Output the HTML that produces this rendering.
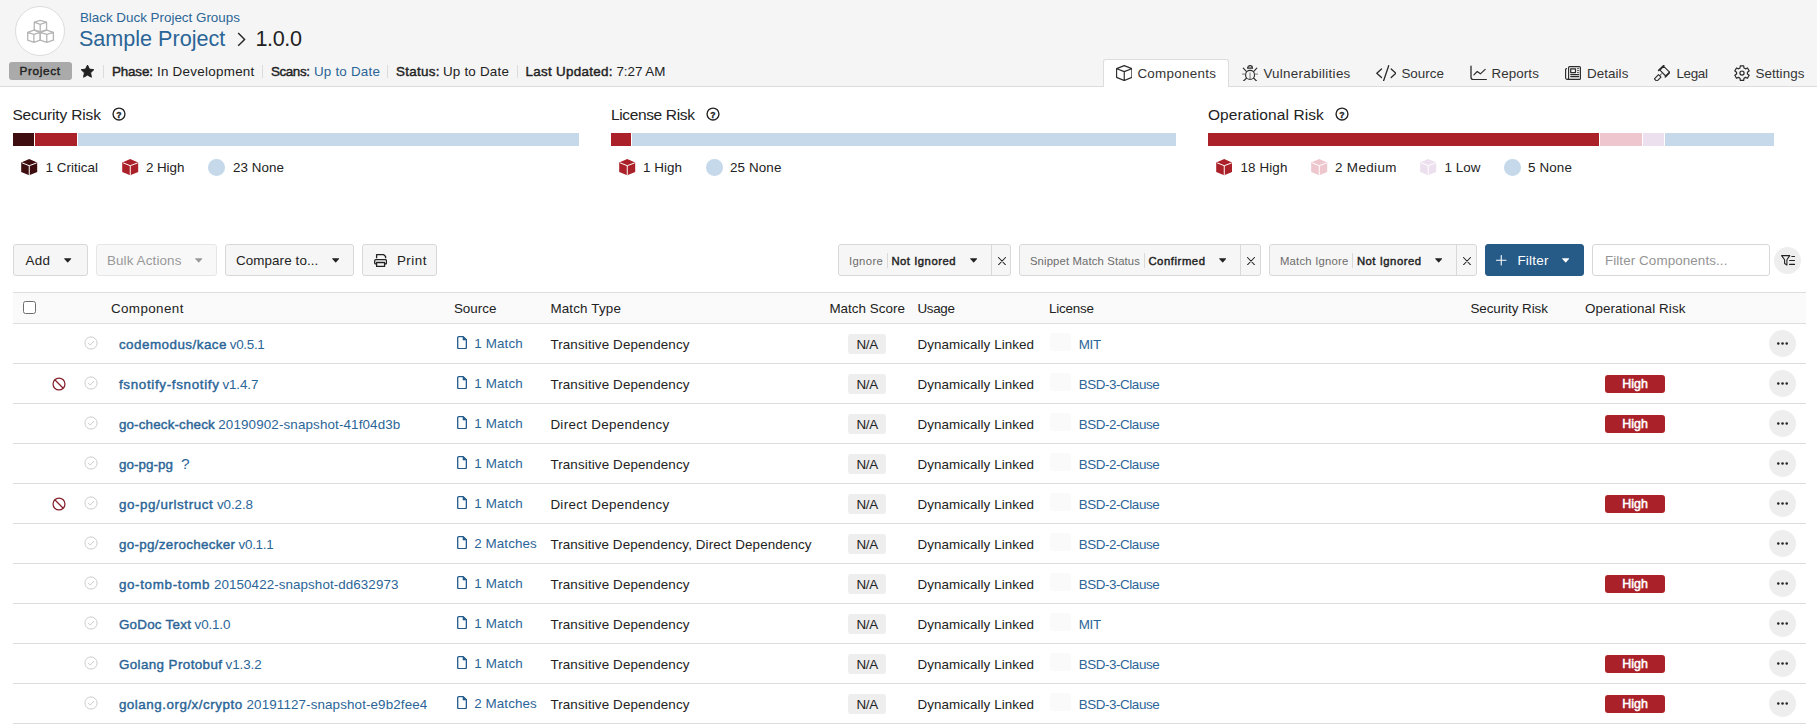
<!DOCTYPE html>
<html lang="en"><head><meta charset="utf-8"><title>Sample Project 1.0.0 - Components</title>
<style>
*{box-sizing:border-box}
html,body{margin:0;padding:0}
body{width:1817px;height:725px;overflow:hidden;background:#fff;color:#222;font-family:"Liberation Sans",sans-serif;font-size:13.4px;position:relative}
a{color:#2b6597;text-decoration:none}
.ab{position:absolute;white-space:nowrap}
header{position:absolute;left:0;top:0;width:1817px;height:87px;background:#f5f5f5;border-bottom:1px solid #ddd}
.logo{position:absolute;left:15px;top:6px;width:50px;height:50px;border-radius:50%;background:#fff;border:1px solid #dcdcdc}
h1{margin:0;font-weight:400}
.badge{position:absolute;left:9px;top:62px;width:63px;height:18px;border-radius:3px;background:#aaa}
.vsep{position:absolute;width:1px;background:#dcdcdc}
nav .tab-active{position:absolute;left:1103px;top:59px;width:126px;height:28px;background:#fff;border:1px solid #ddd;border-bottom:none;border-radius:3px 3px 0 0}
.bar{position:absolute;top:133px;height:13px;display:flex;overflow:hidden}
.bar i{display:block;flex:none;height:13px;border-right:1px solid #fff}
.bar i:last-child{border-right:none}
.dot{position:absolute;width:16.5px;height:16.5px;border-radius:50%;background:#c5d9eb}
.btn{position:absolute;top:244px;height:32px;border:1px solid #d8d8d8;border-radius:3px;background:#f6f6f6}
.btn.dis{border-color:#e6e6e6;background:#f8f8f8}
.btn.pri{background:#265a87;border-color:#265a87}
.fsplit{position:absolute;top:0;width:1px;height:30px;background:#d8d8d8}
.fsep{position:absolute;top:8px;width:1px;height:14.5px;background:#dadada}
.inp{position:absolute;left:1592px;top:244px;width:178px;height:32px;border:1px solid #d8d8d8;border-radius:3px;background:#fff}
.rbtn{position:absolute;width:27px;height:27px;border-radius:50%;background:#eee}
table{position:absolute;left:13px;top:292px;width:1793px;border-collapse:separate;border-spacing:0;table-layout:fixed}
th,td{padding:0;text-align:left;font-weight:400;white-space:nowrap;position:relative;vertical-align:top}
thead th{height:32px;background:#fafafa;border-top:1px solid #ddd;border-bottom:1px solid #ddd;line-height:28px;padding-top:2px}
tbody td{height:40px;border-bottom:1px solid #ddd;line-height:37px;padding-top:2px}
.cb{position:absolute;left:10px;top:8px;width:13px;height:13px;border:1px solid #6e6e6e;border-radius:2.5px;background:#fff}
.na{position:absolute;left:26px;top:10px;width:38px;height:19.5px;border-radius:3px;background:#eee;text-align:center;line-height:21px;letter-spacing:-.3px;padding-left:.3px}
.hi{position:absolute;left:50px;top:11px;width:60px;height:18px;border-radius:3px;background:#aa2129;color:#fff;font-size:12.4px;text-align:center;line-height:18px;-webkit-text-stroke:.5px;letter-spacing:.1px;padding-left:.3px}
.lic{position:absolute;left:8.5px;top:9px;width:21.5px;height:18px;border-radius:3px;background:#fafafa}
b{font-weight:400}
.sb{font-weight:400;-webkit-text-stroke:.42px}
</style></head>
<body>
<header>
<div class="logo"><svg class="ab" style="left:0;top:0" width="48" height="48" viewBox="0 0 48 48" fill="none" stroke="#b5b5b5" stroke-width="1.35" stroke-linejoin="round"><g transform="translate(24.55 24.4) scale(.962 .957) translate(-24.55 -24.4)"><path d="M24.2 12.9L30.8 14.7V22.8L24.2 24.9 18 22.8V14.7zM18 14.7L24.2 17 30.8 14.7M24.2 17V24.9"/><path d="M17.6 23L24.2 25.5V33.6L17.6 35.9 11.2 33.6V25.5zM11.2 25.5L17.6 27.6 24.2 25.5M17.6 27.6V35.9"/><path d="M31 23L37.9 25.5V33.6L31 35.9 24.2 33.6V25.5zM24.2 25.5L31 27.6 37.9 25.5M31 27.6V35.9"/></g></svg></div>
<a class="ab" style="left:79.9px;top:9.0px;font-size:13.4px;line-height:17px;color:#2b6597;">Black Duck Project Groups</a>
<h1><a class="ab" style="left:78.9px;top:26.0px;font-size:21.6px;line-height:25px;color:#2b6597;">Sample Project</a><svg class="ab" style="left:236.5px;top:31.5px" width="9" height="15" viewBox="0 0 9 15" ><path d="M1.2 1.1L7.6 7.5 1.2 13.8" fill="none" stroke="#222" stroke-width="1.4"/></svg><span class="ab" style="left:255.4px;top:26.0px;font-size:21.6px;line-height:25px;letter-spacing:-0.38px;">1.0.0</span></h1>
<div class="badge"><span class="ab sb" style="left:10.4px;top:1.4px;font-size:11.8px;line-height:16px;letter-spacing:0.65px;">Project</span></div>
<svg class="ab" style="left:79.9px;top:64.4px" width="15" height="15" viewBox="0 0 15 15" ><path d="M7.5 1.1l1.9 4 4.4.6-3.2 3.1.8 4.4-3.9-2.1-3.9 2.1.8-4.4L1.2 5.7l4.4-.6z" fill="#222" stroke="#222" stroke-width="1" stroke-linejoin="round"/></svg>
<i class="vsep" style="left:103px;top:65px;height:13px"></i>
<i class="vsep" style="left:262px;top:65px;height:13px"></i>
<i class="vsep" style="left:387px;top:65px;height:13px"></i>
<i class="vsep" style="left:517px;top:65px;height:13px"></i>
<b class="ab sb" style="left:111.9px;top:62.5px;font-size:13.4px;line-height:17px;letter-spacing:-0.12px;">Phase:</b><span class="ab" style="left:156.9px;top:62.5px;font-size:13.4px;line-height:17px;letter-spacing:0.28px;">In Development</span>
<b class="ab sb" style="left:270.9px;top:62.5px;font-size:13.4px;line-height:17px;letter-spacing:-0.37px;">Scans:</b><a class="ab" style="left:313.9px;top:62.5px;font-size:13.4px;line-height:17px;letter-spacing:0.22px;color:#2b6597;">Up to Date</a>
<b class="ab sb" style="left:395.9px;top:62.5px;font-size:13.4px;line-height:17px;letter-spacing:0.32px;">Status:</b><span class="ab" style="left:442.9px;top:62.5px;font-size:13.4px;line-height:17px;letter-spacing:0.22px;">Up to Date</span>
<b class="ab sb" style="left:525.4px;top:62.5px;font-size:13.4px;line-height:17px;letter-spacing:0.31px;">Last Updated:</b><span class="ab" style="left:616.4px;top:62.5px;font-size:13.4px;line-height:17px;letter-spacing:-0.02px;">7:27 AM</span>
</header>
<nav>
<div class="tab-active"></div>
<a><svg class="ab" style="left:1115.6px;top:64.8px" width="16.5" height="16.2" viewBox="0 0 16.5 16.2" ><path d="M8.25 .6 L15.9 3.6 V12.4 L8.25 15.6 L.6 12.4 V3.6 Z M.8 3.7 L8.25 6.6 L15.7 3.7 M8.25 6.6 V15.4" fill="none" stroke="#2b2b2b" stroke-width="1.15" stroke-linejoin="round"/></svg><span class="ab" style="left:1137.4px;top:64.5px;font-size:13.4px;line-height:17px;letter-spacing:0.28px;color:#333;">Components</span></a>
<a><svg class="ab" style="left:1242px;top:65px" width="16.1" height="16.4" viewBox="0 0 16.1 16.4" ><g fill="none" stroke="#2b2b2b" stroke-width="1.15" stroke-linecap="round"><path d="M5.6 3.2a2.45 2.6 0 0 1 4.9 0z" stroke-linejoin="round"/><circle cx="8.05" cy="9.9" r="4.5"/><path d="M4.3 6.3L1.3 3.2M11.8 6.3l3-3.1M4.4 13.2l-3 3M11.7 13.2l3 3"/><path d="M8.05 7.9v6.4M.3 9.1h3M12.8 9.1h3" stroke="#777" stroke-width="1"/></g></svg><span class="ab" style="left:1263.4px;top:64.5px;font-size:13.4px;line-height:17px;letter-spacing:0.29px;color:#333;">Vulnerabilities</span></a>
<a><svg class="ab" style="left:1375.8px;top:64.8px" width="20.6" height="16.5" viewBox="0 0 20.6 16.5" ><g fill="none" stroke="#2b2b2b" stroke-width="1.3" stroke-linecap="round" stroke-linejoin="round"><path d="M5.5 3.9L.8 8.2l4.7 4.3M15.2 3.9l4.7 4.3-4.7 4.3M12.7.7L7.6 15.8"/></g></svg><span class="ab" style="left:1401.4px;top:64.5px;font-size:13.4px;line-height:17px;letter-spacing:0.01px;color:#333;">Source</span></a>
<a><svg class="ab" style="left:1469.5px;top:64.8px" width="17" height="15.5" viewBox="0 0 17 15.5" ><g fill="none" stroke="#2b2b2b" stroke-linecap="round" stroke-linejoin="round"><path d="M1 1.2V12.3a2.3 2.3 0 0 0 2.3 2.3H16.3" stroke-width="1.3"/><path d="M3.9 9.8l3.3-3.3 3.2 2.3 4.8-4.5" stroke-width="1.15"/></g></svg><span class="ab" style="left:1491.4px;top:64.5px;font-size:13.4px;line-height:17px;letter-spacing:0.1px;color:#333;">Reports</span></a>
<a><svg class="ab" style="left:1565px;top:66px" width="16" height="14" viewBox="0 0 16 14" ><g fill="none" stroke="#2b2b2b" stroke-width="1.15" stroke-linejoin="round" stroke-linecap="round"><path d="M4.6.6H14.4a1 1 0 0 1 1 1V12.4a1 1 0 0 1-1 1H2.2a1.6 1.6 0 0 1-1.6-1.6V3.6a1 1 0 0 1 1-1M3.6 12.2V1.6a1 1 0 0 1 1-1M3.6 12a1.4 1.4 0 0 1-1.5 1.4"/><rect x="5.7" y="2.8" width="4.8" height="3.8" stroke-width="1.25"/><path d="M12.4 2.6h1.4M12.4 4.6h1.4M12.4 6.6h1.4" stroke="#555" stroke-width="1"/><path d="M5.7 8.6h8M5.7 10.6h8"/></g></svg><span class="ab" style="left:1586.9px;top:64.5px;font-size:13.4px;line-height:17px;letter-spacing:0.09px;color:#333;">Details</span></a>
<a><svg class="ab" style="left:1653.8px;top:64.6px" width="16.6" height="16.8" viewBox="0 0 16.6 16.8" ><g fill="none" stroke="#2b2b2b" stroke-linejoin="round" stroke-linecap="round"><path d="M5.9 5.2L9.7 1.4l5.8 5.8-3.8 3.8z" stroke-width="1.1"/><path d="M4.7 5.4L9.8.4M11.3 12l4.9-5" stroke-width="1.5"/><path d="M7.5 8.8L6 10.5" stroke-width="1"/><path d="M4.5 9.7L7 12.1 2.8 16.3.4 13.9z" stroke-width="1.15"/></g></svg><span class="ab" style="left:1676.4px;top:64.5px;font-size:13.4px;line-height:17px;letter-spacing:-0.32px;color:#333;">Legal</span></a>
<a><svg class="ab" style="left:1734px;top:64.8px" width="16" height="16.2" viewBox="0 0 16 16.2" ><g fill="none" stroke="#2b2b2b" stroke-width="1.2" stroke-linejoin="round"><path d="M6.03 2.97 L6.31 0.79 L9.69 0.79 L9.97 2.97 L11.46 3.83 L13.49 2.99 L15.17 5.91 L13.43 7.24 L13.43 8.96 L15.17 10.29 L13.49 13.21 L11.46 12.37 L9.97 13.23 L9.69 15.41 L6.31 15.41 L6.03 13.23 L4.54 12.37 L2.51 13.21 L0.83 10.29 L2.57 8.96 L2.57 7.24 L0.83 5.91 L2.51 2.99 L4.54 3.83Z"/><circle cx="8" cy="8.1" r="2.1"/></g></svg><span class="ab" style="left:1755.4px;top:64.5px;font-size:13.4px;line-height:17px;letter-spacing:0.09px;color:#333;">Settings</span></a>
</nav>
<section><h2 class="ab" style="left:12.4px;top:104.5px;font-size:15.5px;line-height:19px;letter-spacing:-0.16px;margin:0;font-weight:400;">Security Risk</h2><svg class="ab" style="left:112.3px;top:107.4px" width="14" height="14" viewBox="0 0 14 14" ><circle cx="7" cy="7" r="5.95" fill="none" stroke="#222" stroke-width="1.35"/><text x="6.9" y="10.6" font-size="8.6" font-weight="700" text-anchor="middle" fill="#222" stroke="#222" stroke-width=".35" font-family="Liberation Sans,sans-serif">?</text></svg><div class="bar" style="left:13px;width:566px"><i style="width:3.8462%;background:#3e0d10"></i><i style="width:7.6923%;background:#aa2129"></i><i style="width:88.4615%;background:#c5d9eb"></i></div><svg class="ab" style="left:21px;top:159px" width="16.5" height="16.5" viewBox="0 0 16.5 16.5" ><path d="M8.2 .1L16.2 3.6V12.9L8.2 16.3 .2 12.9V3.6z" fill="#3e0d10"/><path d="M1.2 3.9L8.25 6.7 15.7 3.9M8.25 6.7V16" fill="none" stroke="#fff" stroke-width="1"/></svg><span class="ab" style="left:45.4px;top:158.5px;font-size:13.4px;line-height:17px;letter-spacing:0.05px;">1 Critical</span><svg class="ab" style="left:122px;top:159px" width="16.5" height="16.5" viewBox="0 0 16.5 16.5" ><path d="M8.2 .1L16.2 3.6V12.9L8.2 16.3 .2 12.9V3.6z" fill="#aa2129"/><path d="M1.2 3.9L8.25 6.7 15.7 3.9M8.25 6.7V16" fill="none" stroke="#fff" stroke-width="1"/></svg><span class="ab" style="left:145.9px;top:158.5px;font-size:13.4px;line-height:17px;letter-spacing:-0.04px;">2 High</span><i class="dot" style="left:208px;top:159px;background:#c5d9eb"></i><span class="ab" style="left:232.9px;top:158.5px;font-size:13.4px;line-height:17px;letter-spacing:0.06px;">23 None</span></section>
<section><h2 class="ab" style="left:610.9px;top:104.5px;font-size:15.5px;line-height:19px;letter-spacing:-0.35px;margin:0;font-weight:400;">License Risk</h2><svg class="ab" style="left:706px;top:107.4px" width="14" height="14" viewBox="0 0 14 14" ><circle cx="7" cy="7" r="5.95" fill="none" stroke="#222" stroke-width="1.35"/><text x="6.9" y="10.6" font-size="8.6" font-weight="700" text-anchor="middle" fill="#222" stroke="#222" stroke-width=".35" font-family="Liberation Sans,sans-serif">?</text></svg><div class="bar" style="left:610.67px;width:565.3px"><i style="width:3.8462%;background:#aa2129"></i><i style="width:96.1538%;background:#c5d9eb"></i></div><svg class="ab" style="left:619px;top:159px" width="16.5" height="16.5" viewBox="0 0 16.5 16.5" ><path d="M8.2 .1L16.2 3.6V12.9L8.2 16.3 .2 12.9V3.6z" fill="#aa2129"/><path d="M1.2 3.9L8.25 6.7 15.7 3.9M8.25 6.7V16" fill="none" stroke="#fff" stroke-width="1"/></svg><span class="ab" style="left:642.9px;top:158.5px;font-size:13.4px;line-height:17px;letter-spacing:0.06px;">1 High</span><i class="dot" style="left:706px;top:159px;background:#c5d9eb"></i><span class="ab" style="left:729.9px;top:158.5px;font-size:13.4px;line-height:17px;letter-spacing:0.14px;">25 None</span></section>
<section><h2 class="ab" style="left:1207.9px;top:104.5px;font-size:15.5px;line-height:19px;letter-spacing:0.09px;margin:0;font-weight:400;">Operational Risk</h2><svg class="ab" style="left:1335.3px;top:107.4px" width="14" height="14" viewBox="0 0 14 14" ><circle cx="7" cy="7" r="5.95" fill="none" stroke="#222" stroke-width="1.35"/><text x="6.9" y="10.6" font-size="8.6" font-weight="700" text-anchor="middle" fill="#222" stroke="#222" stroke-width=".35" font-family="Liberation Sans,sans-serif">?</text></svg><div class="bar" style="left:1208px;width:566px"><i style="width:69.2308%;background:#aa2129"></i><i style="width:7.6923%;background:#eec6cd"></i><i style="width:3.8462%;background:#ecdfee"></i><i style="width:19.2308%;background:#c5d9eb"></i></div><svg class="ab" style="left:1215.5px;top:159px" width="16.5" height="16.5" viewBox="0 0 16.5 16.5" ><path d="M8.2 .1L16.2 3.6V12.9L8.2 16.3 .2 12.9V3.6z" fill="#aa2129"/><path d="M1.2 3.9L8.25 6.7 15.7 3.9M8.25 6.7V16" fill="none" stroke="#fff" stroke-width="1"/></svg><span class="ab" style="left:1240.4px;top:158.5px;font-size:13.4px;line-height:17px;letter-spacing:0.14px;">18 High</span><svg class="ab" style="left:1311px;top:159px" width="16.5" height="16.5" viewBox="0 0 16.5 16.5" ><path d="M8.2 .1L16.2 3.6V12.9L8.2 16.3 .2 12.9V3.6z" fill="#eec6cd"/><path d="M1.2 3.9L8.25 6.7 15.7 3.9M8.25 6.7V16" fill="none" stroke="#fff" stroke-width="1"/></svg><span class="ab" style="left:1334.9px;top:158.5px;font-size:13.4px;line-height:17px;letter-spacing:0.39px;">2 Medium</span><svg class="ab" style="left:1420px;top:159px" width="16.5" height="16.5" viewBox="0 0 16.5 16.5" ><path d="M8.2 .1L16.2 3.6V12.9L8.2 16.3 .2 12.9V3.6z" fill="#ecdfee"/><path d="M1.2 3.9L8.25 6.7 15.7 3.9M8.25 6.7V16" fill="none" stroke="#fff" stroke-width="1"/></svg><span class="ab" style="left:1444.4px;top:158.5px;font-size:13.4px;line-height:17px;letter-spacing:0.07px;">1 Low</span><i class="dot" style="left:1504px;top:159px;background:#c5d9eb"></i><span class="ab" style="left:1527.9px;top:158.5px;font-size:13.4px;line-height:17px;letter-spacing:0.16px;">5 None</span></section>
<div class="toolbar">
<div class="btn " style="left:13px;width:75px"><span class="ab" style="left:11.4px;top:6.5px;font-size:13.4px;line-height:17px;letter-spacing:0.34px;">Add</span><svg class="ab" style="left:50px;top:13.300000000000011px" width="7.5" height="5" viewBox="0 0 7.5 5" ><path d="M.6.3h6.2a.4.4 0 0 1 .3.7L4.1 4.3a.6.6 0 0 1-.8 0L.3 1A.4.4 0 0 1 .6.3z" fill="#222"/></svg></div>
<div class="btn dis" style="left:96px;width:121px"><span class="ab" style="left:9.9px;top:6.5px;font-size:13.4px;line-height:17px;letter-spacing:0.14px;color:#999;">Bulk Actions</span><svg class="ab" style="left:98px;top:13.300000000000011px" width="7.5" height="5" viewBox="0 0 7.5 5" ><path d="M.6.3h6.2a.4.4 0 0 1 .3.7L4.1 4.3a.6.6 0 0 1-.8 0L.3 1A.4.4 0 0 1 .6.3z" fill="#999"/></svg></div>
<div class="btn " style="left:225px;width:129px"><span class="ab" style="left:9.9px;top:6.5px;font-size:13.4px;line-height:17px;letter-spacing:0.11px;">Compare to...</span><svg class="ab" style="left:105.5px;top:13.300000000000011px" width="7.5" height="5" viewBox="0 0 7.5 5" ><path d="M.6.3h6.2a.4.4 0 0 1 .3.7L4.1 4.3a.6.6 0 0 1-.8 0L.3 1A.4.4 0 0 1 .6.3z" fill="#222"/></svg></div>
<div class="btn " style="left:362px;width:75px"><svg class="ab" style="left:11px;top:9px" width="13.2" height="13.2" viewBox="0 0 13.2 13.2" ><g fill="none" stroke="#222" stroke-width="1.3" stroke-linejoin="round"><path d="M2.6 4.3V.7h7.2l1.8 1.8v1.8" /><path d="M2.6 9.9H1.7a1 1 0 0 1-1-1V6.8a1.2 1.2 0 0 1 1.2-1.2h9.4a1.2 1.2 0 0 1 1.2 1.2v2.1a1 1 0 0 1-1 1H10.6"/><rect x="2.6" y="8.5" width="8" height="4"/></g></svg><span class="ab" style="left:33.9px;top:6.5px;font-size:13.4px;line-height:17px;letter-spacing:0.49px;">Print</span></div>
<div class="btn " style="left:838px;width:173px"><span class="ab" style="left:9.9px;top:9.0px;font-size:11.3px;line-height:15px;letter-spacing:0.39px;color:#6c6c6c;">Ignore</span><i class="fsep" style="left:48px"></i><span class="ab sb" style="left:52.4px;top:9.0px;font-size:11.3px;line-height:15px;letter-spacing:0.51px;">Not Ignored</span><svg class="ab" style="left:130.8px;top:13.300000000000011px" width="7.5" height="5" viewBox="0 0 7.5 5" ><path d="M.6.3h6.2a.4.4 0 0 1 .3.7L4.1 4.3a.6.6 0 0 1-.8 0L.3 1A.4.4 0 0 1 .6.3z" fill="#222"/></svg><i class="fsplit" style="left:152px"></i><svg class="ab" style="left:159px;top:11.5px" width="8" height="8.3" viewBox="0 0 8 8.3" ><path d="M.5.5l7 7.3M7.5.5l-7 7.3" stroke="#222" stroke-width="1.05" fill="none" stroke-linecap="round"/></svg></div>
<div class="btn " style="left:1019px;width:242px"><span class="ab" style="left:9.9px;top:9.0px;font-size:11.3px;line-height:15px;letter-spacing:0.14px;color:#6c6c6c;">Snippet Match Status</span><i class="fsep" style="left:124px"></i><span class="ab sb" style="left:128.4px;top:9.0px;font-size:11.3px;line-height:15px;letter-spacing:0.56px;">Confirmed</span><svg class="ab" style="left:198.8px;top:13.300000000000011px" width="7.5" height="5" viewBox="0 0 7.5 5" ><path d="M.6.3h6.2a.4.4 0 0 1 .3.7L4.1 4.3a.6.6 0 0 1-.8 0L.3 1A.4.4 0 0 1 .6.3z" fill="#222"/></svg><i class="fsplit" style="left:220px"></i><svg class="ab" style="left:227.2px;top:11.5px" width="8" height="8.3" viewBox="0 0 8 8.3" ><path d="M.5.5l7 7.3M7.5.5l-7 7.3" stroke="#222" stroke-width="1.05" fill="none" stroke-linecap="round"/></svg></div>
<div class="btn " style="left:1269px;width:208px"><span class="ab" style="left:9.9px;top:9.0px;font-size:11.3px;line-height:15px;letter-spacing:0.23px;color:#6c6c6c;">Match Ignore</span><i class="fsep" style="left:82px"></i><span class="ab sb" style="left:86.9px;top:9.0px;font-size:11.3px;line-height:15px;letter-spacing:0.51px;">Not Ignored</span><svg class="ab" style="left:164.8px;top:13.300000000000011px" width="7.5" height="5" viewBox="0 0 7.5 5" ><path d="M.6.3h6.2a.4.4 0 0 1 .3.7L4.1 4.3a.6.6 0 0 1-.8 0L.3 1A.4.4 0 0 1 .6.3z" fill="#222"/></svg><i class="fsplit" style="left:186px"></i><svg class="ab" style="left:192.7px;top:11.5px" width="8" height="8.3" viewBox="0 0 8 8.3" ><path d="M.5.5l7 7.3M7.5.5l-7 7.3" stroke="#222" stroke-width="1.05" fill="none" stroke-linecap="round"/></svg></div>
<div class="btn pri" style="left:1485px;width:99px"><svg class="ab" style="left:10.2px;top:10.300000000000011px" width="10.5" height="10.5" viewBox="0 0 10.5 10.5" ><path d="M5.25.5v9.5M.5 5.25h9.5" stroke="#fff" stroke-width="1.1" fill="none" stroke-linecap="round"/></svg><span class="ab" style="left:31.4px;top:6.5px;font-size:13.4px;line-height:17px;letter-spacing:0.25px;color:#fff;">Filter</span><svg class="ab" style="left:75.5px;top:13.300000000000011px" width="7.5" height="5" viewBox="0 0 7.5 5" ><path d="M.6.3h6.2a.4.4 0 0 1 .3.7L4.1 4.3a.6.6 0 0 1-.8 0L.3 1A.4.4 0 0 1 .6.3z" fill="#fff"/></svg></div>
<div class="inp"><span class="ab" style="left:11.9px;top:6.5px;font-size:13.4px;line-height:17px;letter-spacing:0.1px;color:#949494;">Filter Components...</span></div>
<div class="rbtn" style="left:1774px;top:247px"><svg class="ab" style="left:6.5px;top:8px" width="14.5" height="11" viewBox="0 0 14.5 11" ><g fill="none" stroke="#222" stroke-width="1.1" stroke-linejoin="round" stroke-linecap="round"><path d="M.6.6h8.2L5.9 4.7v5.2L3.6 8.6V4.7z"/><path d="M10.8 1.5h2.7M8.6 5.5h4.9M8.6 9.4h4.9"/></g></svg></div>
</div>
<table><colgroup><col style="width:29px"><col style="width:34px"><col style="width:28px"><col style="width:343px"><col style="width:96px"><col style="width:279px"><col style="width:88px"><col style="width:131px"><col style="width:422px"><col style="width:92px"><col style="width:160px"><col style="width:91px"></colgroup>
<thead><tr><th><i class="cb"></i></th><th></th><th></th><th style="padding-left:6.9px"><span style="letter-spacing:0.41px;">Component</span></th><th style="padding-left:6.9px"><span style="letter-spacing:0.01px;">Source</span></th><th style="padding-left:7.4px"><span style="letter-spacing:0.17px;">Match Type</span></th><th style="padding-left:7.4px"><span style="letter-spacing:0.03px;">Match Score</span></th><th style="padding-left:7.4px"><span style="letter-spacing:-0.3px;">Usage</span></th><th style="padding-left:7.9px"><span style="letter-spacing:-0.19px;">License</span></th><th style="padding-left:7.4px"><span style="letter-spacing:-0.05px;">Security Risk</span></th><th style="padding-left:29.9px"><span style="letter-spacing:0.1px;">Operational Risk</span></th><th></th></tr></thead><tbody>
<tr><td></td><td></td><td><svg class="ab" style="left:8.25px;top:12.4px" width="14" height="14" viewBox="0 0 14 14" ><circle cx="7" cy="7" r="6.1" fill="none" stroke="#ccc" stroke-width="1"/><path d="M4.3 7.2l1.9 1.9 3.6-3.8" fill="none" stroke="#ccc" stroke-width="1" stroke-linecap="round" stroke-linejoin="round"/></svg></td><td style="padding-left:14.9px"><a><b class="sb" style="letter-spacing:0.49px;">codemodus/kace</b><span style="margin-left:2.8px;letter-spacing:-0.3px">v0.5.1</span></a></td><td><a><svg class="ab" style="left:10px;top:12px" width="10" height="13.2" viewBox="0 0 10 13.2" ><path d="M1.8.65H6.2L9.35 3.8V11.5a1.1 1.1 0 0 1-1.1 1.1H1.8a1.1 1.1 0 0 1-1.1-1.1V1.75a1.1 1.1 0 0 1 1.1-1.1z" fill="none" stroke="#245a8c" stroke-width="1.3" stroke-linejoin="round"/><path d="M6 .65V4H9.35z" fill="#245a8c" stroke="#245a8c" stroke-width=".6" stroke-linejoin="round"/></svg><span class="ab" style="left:27.2px;top:1px;letter-spacing:0.14px">1 Match</span></a></td><td style="padding-left:7.4px"><span style="letter-spacing:0.13px">Transitive Dependency</span></td><td><span class="na">N/A</span></td><td style="padding-left:7.4px"><span style="letter-spacing:0.07px;">Dynamically Linked</span></td><td><i class="lic"></i><a class="ab" style="left:37.7px;top:2px;letter-spacing:-0.28px">MIT</a></td><td></td><td></td><td><span class="rbtn" style="left:54px;top:6px"><svg class="ab" style="left:8px;top:12px" width="11" height="3" viewBox="0 0 11 3" ><circle cx="1.3" cy="1.5" r="1.25" fill="#222"/><circle cx="5.5" cy="1.5" r="1.25" fill="#222"/><circle cx="9.7" cy="1.5" r="1.25" fill="#222"/></svg></span></td></tr>
<tr><td></td><td><svg class="ab" style="left:10.299999999999997px;top:12.5px" width="14" height="14" viewBox="0 0 14 14" ><circle cx="7" cy="7" r="5.95" fill="none" stroke="#85202c" stroke-width="1.25"/><path d="M2.8 2.8L11.2 11.2" stroke="#85202c" stroke-width="1.25"/></svg></td><td><svg class="ab" style="left:8.25px;top:12.4px" width="14" height="14" viewBox="0 0 14 14" ><circle cx="7" cy="7" r="6.1" fill="none" stroke="#ccc" stroke-width="1"/><path d="M4.3 7.2l1.9 1.9 3.6-3.8" fill="none" stroke="#ccc" stroke-width="1" stroke-linecap="round" stroke-linejoin="round"/></svg></td><td style="padding-left:14.9px"><a><b class="sb" style="letter-spacing:0.67px;">fsnotify-fsnotify</b><span style="margin-left:2.8px;letter-spacing:-0.1px">v1.4.7</span></a></td><td><a><svg class="ab" style="left:10px;top:12px" width="10" height="13.2" viewBox="0 0 10 13.2" ><path d="M1.8.65H6.2L9.35 3.8V11.5a1.1 1.1 0 0 1-1.1 1.1H1.8a1.1 1.1 0 0 1-1.1-1.1V1.75a1.1 1.1 0 0 1 1.1-1.1z" fill="none" stroke="#245a8c" stroke-width="1.3" stroke-linejoin="round"/><path d="M6 .65V4H9.35z" fill="#245a8c" stroke="#245a8c" stroke-width=".6" stroke-linejoin="round"/></svg><span class="ab" style="left:27.2px;top:1px;letter-spacing:0.14px">1 Match</span></a></td><td style="padding-left:7.4px"><span style="letter-spacing:0.13px">Transitive Dependency</span></td><td><span class="na">N/A</span></td><td style="padding-left:7.4px"><span style="letter-spacing:0.07px;">Dynamically Linked</span></td><td><i class="lic"></i><a class="ab" style="left:37.7px;top:2px;letter-spacing:-0.42px">BSD-3-Clause</a></td><td></td><td><span class="hi">High</span></td><td><span class="rbtn" style="left:54px;top:6px"><svg class="ab" style="left:8px;top:12px" width="11" height="3" viewBox="0 0 11 3" ><circle cx="1.3" cy="1.5" r="1.25" fill="#222"/><circle cx="5.5" cy="1.5" r="1.25" fill="#222"/><circle cx="9.7" cy="1.5" r="1.25" fill="#222"/></svg></span></td></tr>
<tr><td></td><td></td><td><svg class="ab" style="left:8.25px;top:12.4px" width="14" height="14" viewBox="0 0 14 14" ><circle cx="7" cy="7" r="6.1" fill="none" stroke="#ccc" stroke-width="1"/><path d="M4.3 7.2l1.9 1.9 3.6-3.8" fill="none" stroke="#ccc" stroke-width="1" stroke-linecap="round" stroke-linejoin="round"/></svg></td><td style="padding-left:14.9px"><a><b class="sb" style="letter-spacing:0.16px;">go-check-check</b><span style="margin-left:3.4px;letter-spacing:0.13px">20190902-snapshot-41f04d3b</span></a></td><td><a><svg class="ab" style="left:10px;top:12px" width="10" height="13.2" viewBox="0 0 10 13.2" ><path d="M1.8.65H6.2L9.35 3.8V11.5a1.1 1.1 0 0 1-1.1 1.1H1.8a1.1 1.1 0 0 1-1.1-1.1V1.75a1.1 1.1 0 0 1 1.1-1.1z" fill="none" stroke="#245a8c" stroke-width="1.3" stroke-linejoin="round"/><path d="M6 .65V4H9.35z" fill="#245a8c" stroke="#245a8c" stroke-width=".6" stroke-linejoin="round"/></svg><span class="ab" style="left:27.2px;top:1px;letter-spacing:0.14px">1 Match</span></a></td><td style="padding-left:7.4px"><span style="letter-spacing:0.31px">Direct Dependency</span></td><td><span class="na">N/A</span></td><td style="padding-left:7.4px"><span style="letter-spacing:0.07px;">Dynamically Linked</span></td><td><i class="lic"></i><a class="ab" style="left:37.7px;top:2px;letter-spacing:-0.42px">BSD-2-Clause</a></td><td></td><td><span class="hi">High</span></td><td><span class="rbtn" style="left:54px;top:6px"><svg class="ab" style="left:8px;top:12px" width="11" height="3" viewBox="0 0 11 3" ><circle cx="1.3" cy="1.5" r="1.25" fill="#222"/><circle cx="5.5" cy="1.5" r="1.25" fill="#222"/><circle cx="9.7" cy="1.5" r="1.25" fill="#222"/></svg></span></td></tr>
<tr><td></td><td></td><td><svg class="ab" style="left:8.25px;top:12.4px" width="14" height="14" viewBox="0 0 14 14" ><circle cx="7" cy="7" r="6.1" fill="none" stroke="#ccc" stroke-width="1"/><path d="M4.3 7.2l1.9 1.9 3.6-3.8" fill="none" stroke="#ccc" stroke-width="1" stroke-linecap="round" stroke-linejoin="round"/></svg></td><td style="padding-left:14.9px"><a><b class="sb" style="letter-spacing:0.07px;">go-pg-pg</b><span style="margin-left:8.0px;font-size:15.5px;line-height:20px;vertical-align:baseline">?</span></a></td><td><a><svg class="ab" style="left:10px;top:12px" width="10" height="13.2" viewBox="0 0 10 13.2" ><path d="M1.8.65H6.2L9.35 3.8V11.5a1.1 1.1 0 0 1-1.1 1.1H1.8a1.1 1.1 0 0 1-1.1-1.1V1.75a1.1 1.1 0 0 1 1.1-1.1z" fill="none" stroke="#245a8c" stroke-width="1.3" stroke-linejoin="round"/><path d="M6 .65V4H9.35z" fill="#245a8c" stroke="#245a8c" stroke-width=".6" stroke-linejoin="round"/></svg><span class="ab" style="left:27.2px;top:1px;letter-spacing:0.14px">1 Match</span></a></td><td style="padding-left:7.4px"><span style="letter-spacing:0.13px">Transitive Dependency</span></td><td><span class="na">N/A</span></td><td style="padding-left:7.4px"><span style="letter-spacing:0.07px;">Dynamically Linked</span></td><td><i class="lic"></i><a class="ab" style="left:37.7px;top:2px;letter-spacing:-0.42px">BSD-2-Clause</a></td><td></td><td></td><td><span class="rbtn" style="left:54px;top:6px"><svg class="ab" style="left:8px;top:12px" width="11" height="3" viewBox="0 0 11 3" ><circle cx="1.3" cy="1.5" r="1.25" fill="#222"/><circle cx="5.5" cy="1.5" r="1.25" fill="#222"/><circle cx="9.7" cy="1.5" r="1.25" fill="#222"/></svg></span></td></tr>
<tr><td></td><td><svg class="ab" style="left:10.299999999999997px;top:12.5px" width="14" height="14" viewBox="0 0 14 14" ><circle cx="7" cy="7" r="5.95" fill="none" stroke="#85202c" stroke-width="1.25"/><path d="M2.8 2.8L11.2 11.2" stroke="#85202c" stroke-width="1.25"/></svg></td><td><svg class="ab" style="left:8.25px;top:12.4px" width="14" height="14" viewBox="0 0 14 14" ><circle cx="7" cy="7" r="6.1" fill="none" stroke="#ccc" stroke-width="1"/><path d="M4.3 7.2l1.9 1.9 3.6-3.8" fill="none" stroke="#ccc" stroke-width="1" stroke-linecap="round" stroke-linejoin="round"/></svg></td><td style="padding-left:14.9px"><a><b class="sb" style="letter-spacing:0.59px;">go-pg/urlstruct</b><span style="margin-left:3.6px;letter-spacing:-0.08px">v0.2.8</span></a></td><td><a><svg class="ab" style="left:10px;top:12px" width="10" height="13.2" viewBox="0 0 10 13.2" ><path d="M1.8.65H6.2L9.35 3.8V11.5a1.1 1.1 0 0 1-1.1 1.1H1.8a1.1 1.1 0 0 1-1.1-1.1V1.75a1.1 1.1 0 0 1 1.1-1.1z" fill="none" stroke="#245a8c" stroke-width="1.3" stroke-linejoin="round"/><path d="M6 .65V4H9.35z" fill="#245a8c" stroke="#245a8c" stroke-width=".6" stroke-linejoin="round"/></svg><span class="ab" style="left:27.2px;top:1px;letter-spacing:0.14px">1 Match</span></a></td><td style="padding-left:7.4px"><span style="letter-spacing:0.31px">Direct Dependency</span></td><td><span class="na">N/A</span></td><td style="padding-left:7.4px"><span style="letter-spacing:0.07px;">Dynamically Linked</span></td><td><i class="lic"></i><a class="ab" style="left:37.7px;top:2px;letter-spacing:-0.42px">BSD-2-Clause</a></td><td></td><td><span class="hi">High</span></td><td><span class="rbtn" style="left:54px;top:6px"><svg class="ab" style="left:8px;top:12px" width="11" height="3" viewBox="0 0 11 3" ><circle cx="1.3" cy="1.5" r="1.25" fill="#222"/><circle cx="5.5" cy="1.5" r="1.25" fill="#222"/><circle cx="9.7" cy="1.5" r="1.25" fill="#222"/></svg></span></td></tr>
<tr><td></td><td></td><td><svg class="ab" style="left:8.25px;top:12.4px" width="14" height="14" viewBox="0 0 14 14" ><circle cx="7" cy="7" r="6.1" fill="none" stroke="#ccc" stroke-width="1"/><path d="M4.3 7.2l1.9 1.9 3.6-3.8" fill="none" stroke="#ccc" stroke-width="1" stroke-linecap="round" stroke-linejoin="round"/></svg></td><td style="padding-left:14.9px"><a><b class="sb" style="letter-spacing:0.33px;">go-pg/zerochecker</b><span style="margin-left:3.2px;letter-spacing:-0.28px">v0.1.1</span></a></td><td><a><svg class="ab" style="left:10px;top:12px" width="10" height="13.2" viewBox="0 0 10 13.2" ><path d="M1.8.65H6.2L9.35 3.8V11.5a1.1 1.1 0 0 1-1.1 1.1H1.8a1.1 1.1 0 0 1-1.1-1.1V1.75a1.1 1.1 0 0 1 1.1-1.1z" fill="none" stroke="#245a8c" stroke-width="1.3" stroke-linejoin="round"/><path d="M6 .65V4H9.35z" fill="#245a8c" stroke="#245a8c" stroke-width=".6" stroke-linejoin="round"/></svg><span class="ab" style="left:27.2px;top:1px;letter-spacing:0.09px">2 Matches</span></a></td><td style="padding-left:7.4px"><span style="letter-spacing:0.11px">Transitive Dependency, Direct Dependency</span></td><td><span class="na">N/A</span></td><td style="padding-left:7.4px"><span style="letter-spacing:0.07px;">Dynamically Linked</span></td><td><i class="lic"></i><a class="ab" style="left:37.7px;top:2px;letter-spacing:-0.42px">BSD-2-Clause</a></td><td></td><td></td><td><span class="rbtn" style="left:54px;top:6px"><svg class="ab" style="left:8px;top:12px" width="11" height="3" viewBox="0 0 11 3" ><circle cx="1.3" cy="1.5" r="1.25" fill="#222"/><circle cx="5.5" cy="1.5" r="1.25" fill="#222"/><circle cx="9.7" cy="1.5" r="1.25" fill="#222"/></svg></span></td></tr>
<tr><td></td><td></td><td><svg class="ab" style="left:8.25px;top:12.4px" width="14" height="14" viewBox="0 0 14 14" ><circle cx="7" cy="7" r="6.1" fill="none" stroke="#ccc" stroke-width="1"/><path d="M4.3 7.2l1.9 1.9 3.6-3.8" fill="none" stroke="#ccc" stroke-width="1" stroke-linecap="round" stroke-linejoin="round"/></svg></td><td style="padding-left:14.9px"><a><b class="sb" style="letter-spacing:0.66px;">go-tomb-tomb</b><span style="margin-left:3.8px;letter-spacing:0.08px">20150422-snapshot-dd632973</span></a></td><td><a><svg class="ab" style="left:10px;top:12px" width="10" height="13.2" viewBox="0 0 10 13.2" ><path d="M1.8.65H6.2L9.35 3.8V11.5a1.1 1.1 0 0 1-1.1 1.1H1.8a1.1 1.1 0 0 1-1.1-1.1V1.75a1.1 1.1 0 0 1 1.1-1.1z" fill="none" stroke="#245a8c" stroke-width="1.3" stroke-linejoin="round"/><path d="M6 .65V4H9.35z" fill="#245a8c" stroke="#245a8c" stroke-width=".6" stroke-linejoin="round"/></svg><span class="ab" style="left:27.2px;top:1px;letter-spacing:0.14px">1 Match</span></a></td><td style="padding-left:7.4px"><span style="letter-spacing:0.13px">Transitive Dependency</span></td><td><span class="na">N/A</span></td><td style="padding-left:7.4px"><span style="letter-spacing:0.07px;">Dynamically Linked</span></td><td><i class="lic"></i><a class="ab" style="left:37.7px;top:2px;letter-spacing:-0.42px">BSD-3-Clause</a></td><td></td><td><span class="hi">High</span></td><td><span class="rbtn" style="left:54px;top:6px"><svg class="ab" style="left:8px;top:12px" width="11" height="3" viewBox="0 0 11 3" ><circle cx="1.3" cy="1.5" r="1.25" fill="#222"/><circle cx="5.5" cy="1.5" r="1.25" fill="#222"/><circle cx="9.7" cy="1.5" r="1.25" fill="#222"/></svg></span></td></tr>
<tr><td></td><td></td><td><svg class="ab" style="left:8.25px;top:12.4px" width="14" height="14" viewBox="0 0 14 14" ><circle cx="7" cy="7" r="6.1" fill="none" stroke="#ccc" stroke-width="1"/><path d="M4.3 7.2l1.9 1.9 3.6-3.8" fill="none" stroke="#ccc" stroke-width="1" stroke-linecap="round" stroke-linejoin="round"/></svg></td><td style="padding-left:14.9px"><a><b class="sb" style="letter-spacing:0.25px;">GoDoc Text</b><span style="margin-left:3.5px;letter-spacing:-0.14px">v0.1.0</span></a></td><td><a><svg class="ab" style="left:10px;top:12px" width="10" height="13.2" viewBox="0 0 10 13.2" ><path d="M1.8.65H6.2L9.35 3.8V11.5a1.1 1.1 0 0 1-1.1 1.1H1.8a1.1 1.1 0 0 1-1.1-1.1V1.75a1.1 1.1 0 0 1 1.1-1.1z" fill="none" stroke="#245a8c" stroke-width="1.3" stroke-linejoin="round"/><path d="M6 .65V4H9.35z" fill="#245a8c" stroke="#245a8c" stroke-width=".6" stroke-linejoin="round"/></svg><span class="ab" style="left:27.2px;top:1px;letter-spacing:0.14px">1 Match</span></a></td><td style="padding-left:7.4px"><span style="letter-spacing:0.13px">Transitive Dependency</span></td><td><span class="na">N/A</span></td><td style="padding-left:7.4px"><span style="letter-spacing:0.07px;">Dynamically Linked</span></td><td><i class="lic"></i><a class="ab" style="left:37.7px;top:2px;letter-spacing:-0.28px">MIT</a></td><td></td><td></td><td><span class="rbtn" style="left:54px;top:6px"><svg class="ab" style="left:8px;top:12px" width="11" height="3" viewBox="0 0 11 3" ><circle cx="1.3" cy="1.5" r="1.25" fill="#222"/><circle cx="5.5" cy="1.5" r="1.25" fill="#222"/><circle cx="9.7" cy="1.5" r="1.25" fill="#222"/></svg></span></td></tr>
<tr><td></td><td></td><td><svg class="ab" style="left:8.25px;top:12.4px" width="14" height="14" viewBox="0 0 14 14" ><circle cx="7" cy="7" r="6.1" fill="none" stroke="#ccc" stroke-width="1"/><path d="M4.3 7.2l1.9 1.9 3.6-3.8" fill="none" stroke="#ccc" stroke-width="1" stroke-linecap="round" stroke-linejoin="round"/></svg></td><td style="padding-left:14.9px"><a><b class="sb" style="letter-spacing:0.4px;">Golang Protobuf</b><span style="margin-left:3.2px;letter-spacing:-0.08px">v1.3.2</span></a></td><td><a><svg class="ab" style="left:10px;top:12px" width="10" height="13.2" viewBox="0 0 10 13.2" ><path d="M1.8.65H6.2L9.35 3.8V11.5a1.1 1.1 0 0 1-1.1 1.1H1.8a1.1 1.1 0 0 1-1.1-1.1V1.75a1.1 1.1 0 0 1 1.1-1.1z" fill="none" stroke="#245a8c" stroke-width="1.3" stroke-linejoin="round"/><path d="M6 .65V4H9.35z" fill="#245a8c" stroke="#245a8c" stroke-width=".6" stroke-linejoin="round"/></svg><span class="ab" style="left:27.2px;top:1px;letter-spacing:0.14px">1 Match</span></a></td><td style="padding-left:7.4px"><span style="letter-spacing:0.13px">Transitive Dependency</span></td><td><span class="na">N/A</span></td><td style="padding-left:7.4px"><span style="letter-spacing:0.07px;">Dynamically Linked</span></td><td><i class="lic"></i><a class="ab" style="left:37.7px;top:2px;letter-spacing:-0.42px">BSD-3-Clause</a></td><td></td><td><span class="hi">High</span></td><td><span class="rbtn" style="left:54px;top:6px"><svg class="ab" style="left:8px;top:12px" width="11" height="3" viewBox="0 0 11 3" ><circle cx="1.3" cy="1.5" r="1.25" fill="#222"/><circle cx="5.5" cy="1.5" r="1.25" fill="#222"/><circle cx="9.7" cy="1.5" r="1.25" fill="#222"/></svg></span></td></tr>
<tr><td></td><td></td><td><svg class="ab" style="left:8.25px;top:12.4px" width="14" height="14" viewBox="0 0 14 14" ><circle cx="7" cy="7" r="6.1" fill="none" stroke="#ccc" stroke-width="1"/><path d="M4.3 7.2l1.9 1.9 3.6-3.8" fill="none" stroke="#ccc" stroke-width="1" stroke-linecap="round" stroke-linejoin="round"/></svg></td><td style="padding-left:14.9px"><a><b class="sb" style="letter-spacing:0.52px;">golang.org/x/crypto</b><span style="margin-left:3.9px;letter-spacing:0.12px">20191127-snapshot-e9b2fee4</span></a></td><td><a><svg class="ab" style="left:10px;top:12px" width="10" height="13.2" viewBox="0 0 10 13.2" ><path d="M1.8.65H6.2L9.35 3.8V11.5a1.1 1.1 0 0 1-1.1 1.1H1.8a1.1 1.1 0 0 1-1.1-1.1V1.75a1.1 1.1 0 0 1 1.1-1.1z" fill="none" stroke="#245a8c" stroke-width="1.3" stroke-linejoin="round"/><path d="M6 .65V4H9.35z" fill="#245a8c" stroke="#245a8c" stroke-width=".6" stroke-linejoin="round"/></svg><span class="ab" style="left:27.2px;top:1px;letter-spacing:0.09px">2 Matches</span></a></td><td style="padding-left:7.4px"><span style="letter-spacing:0.13px">Transitive Dependency</span></td><td><span class="na">N/A</span></td><td style="padding-left:7.4px"><span style="letter-spacing:0.07px;">Dynamically Linked</span></td><td><i class="lic"></i><a class="ab" style="left:37.7px;top:2px;letter-spacing:-0.42px">BSD-3-Clause</a></td><td></td><td><span class="hi">High</span></td><td><span class="rbtn" style="left:54px;top:6px"><svg class="ab" style="left:8px;top:12px" width="11" height="3" viewBox="0 0 11 3" ><circle cx="1.3" cy="1.5" r="1.25" fill="#222"/><circle cx="5.5" cy="1.5" r="1.25" fill="#222"/><circle cx="9.7" cy="1.5" r="1.25" fill="#222"/></svg></span></td></tr>
</tbody></table>
</body></html>
